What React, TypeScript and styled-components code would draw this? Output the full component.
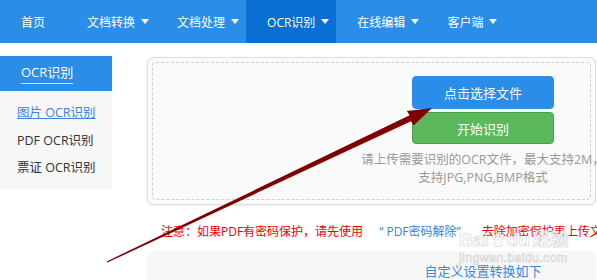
import React from "react";
import styled, { createGlobalStyle } from "styled-components";

const GlobalStyle = createGlobalStyle`
  body {
    margin: 0;
    background: #fff;
    font-family: "Open Sans", "Noto Sans CJK SC", sans-serif;
    font-size: 12px;
    color: #333;
  }
`;

const Page = styled.div`
  position: relative;
  width: 597px;
  height: 280px;
  overflow: hidden;
`;

// Nav
const NavBar = styled.nav`
  display: flex;
  height: 43px;
  background: #2a8ee9;
`;
const NavItem = styled.div<{ $active?: boolean; $drop?: boolean }>`
  display: flex;
  align-items: center;
  padding: ${(p) => (p.$drop ? "0 7px 0 21px" : "0 21px")};
  background: ${(p) => (p.$active ? "#0a6fd2" : "transparent")};
  color: #fff;
  font-size: 12px;
`;
const Caret = styled.span`
  width: 0;
  height: 0;
  margin-left: 6px;
  border-left: 4.5px solid transparent;
  border-right: 4.5px solid transparent;
  border-top: 5px solid #fff;
`;

// Body
const Body = styled.div`
  display: flex;
  align-items: flex-start;
  padding-top: 13px;
`;

const Sidebar = styled.aside`
  width: 112px;
  flex-shrink: 0;
`;
const SideHead = styled.div`
  height: 35px;
  box-sizing: border-box;
  padding: 7px 0 0 21px;
  background: #2a8ee9;
`;
const SideTitle = styled.span`
  display: inline-block;
  color: #fff;
  font-size: 13px;
  line-height: 18px;
  padding-bottom: 2px;
  border-bottom: 1px solid rgba(255, 255, 255, 0.75);
`;
const SideList = styled.ul`
  list-style: none;
  margin: 0;
  padding: 8px 0 7px 17px;
  background: #f7f7f7;
`;
const SideLink = styled.li<{ $current?: boolean }>`
  line-height: 27.5px;
  font-size: 12.5px;
  color: ${(p) => (p.$current ? "#3a82dc" : "#333")};
  text-decoration: ${(p) => (p.$current ? "underline" : "none")};
`;

const Main = styled.main`
  width: 449px;
  margin: 1px 0 0 35px;
`;
const UploadCard = styled.section`
  height: 148px;
  box-sizing: border-box;
  padding: 4px;
  border: 1px solid #dedede;
  border-radius: 6px;
  background: #fafafa;
  box-shadow: 0 1px 3px rgba(0, 0, 0, 0.08);
`;
const DropZone = styled.div`
  height: 100%;
  box-sizing: border-box;
  padding: 13px 0 0 210px;
  border: 1px dashed #cfcfcf;
  border-radius: 4px;
`;
const Column = styled.div`
  width: 240px;
  display: flex;
  flex-direction: column;
  align-items: center;
`;
const Button = styled.div<{ $tone: "blue" | "green" }>`
  width: 142px;
  height: ${(p) => (p.$tone === "blue" ? "33px" : "32px")};
  margin-bottom: 3px;
  box-sizing: border-box;
  display: flex;
  align-items: center;
  justify-content: center;
  border-radius: 4px;
  color: #fff;
  font-size: 13px;
  background: ${(p) => (p.$tone === "blue" ? "#2a8ee9" : "#5cb85c")};
  border: 1px solid ${(p) => (p.$tone === "blue" ? "#2a8ee9" : "#4a9e4a")};
`;
const Hint = styled.p`
  margin: 4px 0 0;
  color: #999;
  font-size: 12.5px;
  line-height: 18px;
  text-align: center;
  white-space: nowrap;
`;

const Notice = styled.p`
  margin: 18px 0 0;
  padding-left: 14px;
  line-height: 18px;
  color: #f40000;
  white-space: nowrap;
`;
const NoticeLink = styled.span`
  color: #3a82dc;
  margin: 0 21px 0 16px;
`;

const SettingsCard = styled.section`
  margin-top: 10px;
  height: 60px;
  padding: 11px 0 0 216px;
  border-radius: 6px;
  background: #f7f7f7;
`;
const SettingsTitle = styled.div`
  width: 240px;
  text-align: center;
  font-size: 13px;
  line-height: 18px;
  color: #3a8ae0;
`;

// overlays
const Overlay = styled.svg`
  position: absolute;
  left: 0;
  top: 0;
  pointer-events: none;
`;
const Watermark = styled.div`
  position: absolute;
  left: 459px;
  top: 229px;
  pointer-events: none;
  color: rgba(255, 255, 255, 0.85);
  -webkit-text-stroke: 0.6px #d2d2d2;
  font-family: "Liberation Sans", "Noto Sans CJK SC", sans-serif;
`;
const MarkTop = styled.div`
  display: flex;
  align-items: center;
  font-size: 19px;
  font-weight: bold;
  line-height: 22px;
`;
const MarkSub = styled.div`
  font-size: 12.5px;
  line-height: 14px;
  letter-spacing: 0.3px;
`;

const navItems = [
  { label: "首页" },
  { label: "文档转换", drop: true },
  { label: "文档处理", drop: true },
  { label: "OCR识别", drop: true, active: true },
  { label: "在线编辑", drop: true },
  { label: "客户端", drop: true },
];

export default function App() {
  return (
    <Page>
      <GlobalStyle />
      <NavBar>
        {navItems.map((n) => (
          <NavItem key={n.label} $active={n.active} $drop={n.drop}>
            {n.label}
            {n.drop && <Caret />}
          </NavItem>
        ))}
      </NavBar>

      <Body>
        <Sidebar>
          <SideHead>
            <SideTitle>OCR识别</SideTitle>
          </SideHead>
          <SideList>
            <SideLink $current>图片 OCR识别</SideLink>
            <SideLink>PDF OCR识别</SideLink>
            <SideLink>票证 OCR识别</SideLink>
          </SideList>
        </Sidebar>

        <Main>
          <UploadCard>
            <DropZone>
              <Column>
                <Button $tone="blue">点击选择文件</Button>
                <Button $tone="green">开始识别</Button>
                <Hint>
                  请上传需要识别的OCR文件，最大支持2M，
                  <br />
                  支持JPG,PNG,BMP格式
                </Hint>
              </Column>
            </DropZone>
          </UploadCard>

          <Notice>
            注意：如果PDF有密码保护，请先使用
            <NoticeLink>“ PDF密码解除”</NoticeLink>
            去除加密保护再上传文件
          </Notice>

          <SettingsCard>
            <SettingsTitle>自定义设置转换如下</SettingsTitle>
          </SettingsCard>
        </Main>
      </Body>

      <Watermark>
        <MarkTop>
          Bai
          <svg width="16" height="16" viewBox="0 0 16 16" style={{ margin: "0 1px" }}>
            <g fill="#fff" stroke="#d2d2d2" strokeWidth="0.8">
              <ellipse cx="4" cy="5" rx="1.8" ry="2.3" />
              <ellipse cx="8" cy="3.2" rx="1.8" ry="2.3" />
              <ellipse cx="12" cy="5" rx="1.8" ry="2.3" />
              <path d="M4 13 C4 9 7 7.5 8 7.5 C9 7.5 12 9 12 13 C12 15 4 15 4 13 Z" />
            </g>
          </svg>
          du
          <span style={{ marginLeft: 3, fontSize: 18 }}>经验</span>
        </MarkTop>
        <MarkSub>jingwan.baidu.com</MarkSub>
      </Watermark>

      <Overlay width="597" height="280" viewBox="0 0 597 280">
        <polygon
          fill="#800000"
          points="106.7,261.4 409.6,115.3 406.9,111.1 432,108 413.7,125.5 411.0,121.3 107.3,262.6"
        />
      </Overlay>
    </Page>
  );
}
